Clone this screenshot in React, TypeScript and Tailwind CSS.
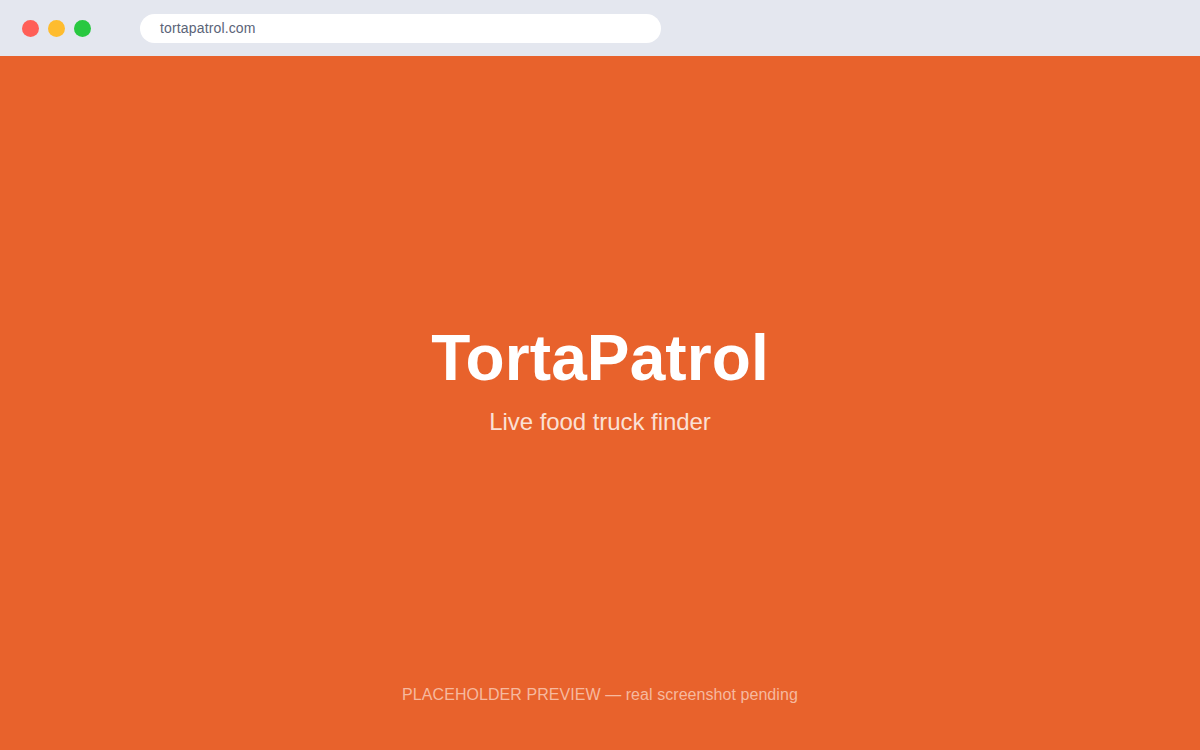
const content = {
  url: "tortapatrol.com",
  heading: "TortaPatrol",
  subtext: "Live food truck finder",
  note: "PLACEHOLDER PREVIEW — real screenshot pending",
};

export default function App() {
  return (
    <div className="flex h-screen w-full flex-col bg-[#e8622c] font-['Liberation_Sans',Arial,sans-serif]">
      {/* Browser bar */}
      <header className="flex h-14 shrink-0 items-start bg-[#e4e7ef] pt-3.5 pl-[22px]">
        <div className="mt-1.5 flex gap-[9px]">
          <span className="size-[17px] rounded-full bg-[#ff5f57]" />
          <span className="size-[17px] rounded-full bg-[#febc2e]" />
          <span className="size-[17px] rounded-full bg-[#28c840]" />
        </div>
        <div className="ml-[49px] flex h-[29px] w-[521px] items-center rounded-full bg-white px-5 pb-0.5 text-sm tracking-[0.15px] text-[#5b6478]">
          {content.url}
        </div>
      </header>

      {/* Preview */}
      <main className="flex flex-1 flex-col items-center pt-[266px] text-center">
        <h1 className="text-[64px] leading-[72px] font-bold tracking-[0.1px] text-white">
          {content.heading}
        </h1>
        <p className="mt-3 text-2xl tracking-[-0.06px] text-[#fbe0d5]">{content.subtext}</p>
        <p className="mt-auto mb-[43px] text-base tracking-[0.06px] text-[#f6b99f]">
          {content.note}
        </p>
      </main>
    </div>
  );
}
